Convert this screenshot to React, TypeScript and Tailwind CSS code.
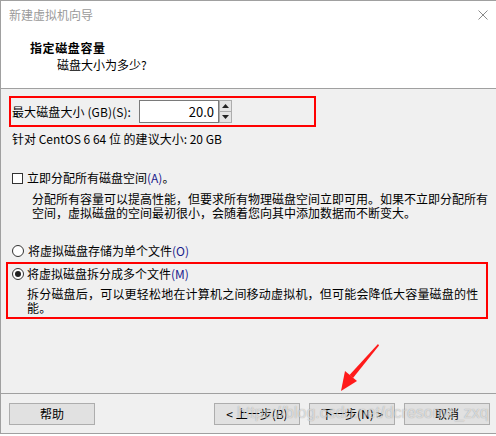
import React from "react";

const font = "font-['Noto_Sans_CJK_SC','Noto_Sans',sans-serif]";

function Spinner() {
  return (
    <div className="flex h-[23px] w-[13px] flex-col border border-[#adadad] bg-[#e5e5e5]">
      <div className="flex flex-1 items-center justify-center border-b border-[#adadad]">
        <svg width="7" height="4" viewBox="0 0 7 4">
          <polygon points="3.5,0 7,4 0,4" fill="#222" />
        </svg>
      </div>
      <div className="flex flex-1 items-center justify-center">
        <svg width="7" height="4" viewBox="0 0 7 4">
          <polygon points="0,0 7,0 3.5,4" fill="#222" />
        </svg>
      </div>
    </div>
  );
}

function Button({ children }: { children: React.ReactNode }) {
  return (
    <button
      type="button"
      className="flex h-[22px] w-[86px] items-center justify-center border border-[#adadad] bg-[#e1e1e1] text-[12px] leading-[16px] text-black"
    >
      {children}
    </button>
  );
}

export default function App() {
  return (
    <div className={`relative h-[436px] w-[496px] overflow-hidden bg-white ${font}`}>
      <div className="flex h-[434px] w-[496px] flex-col border-b border-l border-t border-[#a0a0a0]">
        {/* header */}
        <div className="h-[88px] shrink-0 border-b border-[#a0a0a0] bg-white">
          <div className="flex items-center justify-between pl-[8px] pr-[8px] pt-[6px]">
            <span className="text-[12px] leading-[16px] text-[#9a9a9a]">新建虚拟机向导</span>
            <svg width="10" height="10" viewBox="0 0 10 10">
              <path d="M0.5 0.5 L9.5 9.5 M9.5 0.5 L0.5 9.5" stroke="#8a8a8a" strokeWidth="1" />
            </svg>
          </div>
          <div className="mt-[17px] pl-[29px] text-[12px] font-bold leading-[16px] tracking-[0.6px] text-black">
            指定磁盘容量
          </div>
          <div className="mt-[1px] pl-[56px] text-[12px] leading-[16px] text-black">磁盘大小为多少?</div>
        </div>

        {/* body */}
        <div className="flex h-[304px] shrink-0 flex-col bg-[#f0f0f0] text-[12px] text-black">
          <div className="ml-[8px] mt-[7px] flex h-[31px] w-[307px] items-center border-2 border-[#ff0000] pl-[1px]">
            <span className="w-[127px] leading-[16px] tracking-[0.1px]">最大磁盘大小 (GB)(S):</span>
            <div className="flex h-[23px] w-[80px] items-center justify-end border border-[#7a7a7a] bg-white pr-[4px] text-[13px] leading-[16px]">
              20.0
            </div>
            <Spinner />
          </div>

          <div className="ml-[11px] mt-[4px] leading-[16px]">针对 CentOS 6 64 位 的建议大小: 20 GB</div>

          <div className="ml-[11px] mt-[23px] flex h-[16px] items-center">
            <div className="h-[11px] w-[11px] border border-[#333] bg-white" />
            <span className="ml-[4px] leading-[16px]">
              立即分配所有磁盘空间<span className="text-[#1a1a8c]">(A)</span>。
            </span>
          </div>
          <div className="ml-[31px] mt-[6px] whitespace-nowrap leading-[14px]">
            分配所有容量可以提高性能，但要求所有物理磁盘空间立即可用。如果不立即分配所有
            <br />
            空间，虚拟磁盘的空间最初很小，会随着您向其中添加数据而不断变大。
          </div>

          <div className="ml-[11px] mt-[23px] flex h-[16px] items-center">
            <div className="h-[12px] w-[12px] rounded-full border border-[#333] bg-white" />
            <span className="ml-[4px] leading-[16px]">
              将虚拟磁盘存储为单个文件<span className="text-[#1a1a8c]">(O)</span>
            </span>
          </div>

          <div className="ml-[5px] mt-[3px] flex h-[57px] w-[482px] flex-col border-2 border-[#ff0000] pl-[4px] pt-[2px]">
            <div className="flex h-[16px] items-center">
              <div className="flex h-[12px] w-[12px] items-center justify-center rounded-full border border-[#333] bg-white">
                <div className="h-[6px] w-[6px] rounded-full bg-[#222]" />
              </div>
              <span className="ml-[3px] leading-[16px]">
                将虚拟磁盘拆分成多个文件<span className="text-[#1a1a8c]">(M)</span>
              </span>
            </div>
            <div className="ml-[15px] mt-[5px] whitespace-nowrap leading-[14px] tracking-[0.2px]">
              拆分磁盘后，可以更轻松地在计算机之间移动虚拟机，但可能会降低大容量磁盘的性
              <br />
              能。
            </div>
          </div>
        </div>

        {/* footer */}
        <div className="flex flex-1 items-start border-t border-[#a0a0a0] bg-[#f0f0f0] pl-[8px] pt-[9px]">
          <Button>帮助</Button>
          <div className="ml-[119px] flex gap-[9px]">
            <Button>&lt; 上一步(B)</Button>
            <Button>下一步(N) &gt;</Button>
            <Button>取消</Button>
          </div>
        </div>
      </div>

      {/* red annotation arrow */}
      <svg className="absolute left-[336px] top-[340px]" width="48" height="56" viewBox="0 0 48 56">
        <polygon points="42,4 43,5.5 17,38 13.5,35" fill="#ff1a1a" />
        <polygon points="5,51 9,31 21,41" fill="#ff1a1a" />
      </svg>

      {/* watermark */}
      <div className="pointer-events-none absolute left-[237px] top-[403px] whitespace-nowrap font-['Liberation_Sans',sans-serif] text-[16px] leading-[20px] text-white/60 [text-shadow:0_0_1px_rgba(0,0,0,0.35)]">
        https://blog.csdn.net/dcresome_zxq
      </div>
    </div>
  );
}
